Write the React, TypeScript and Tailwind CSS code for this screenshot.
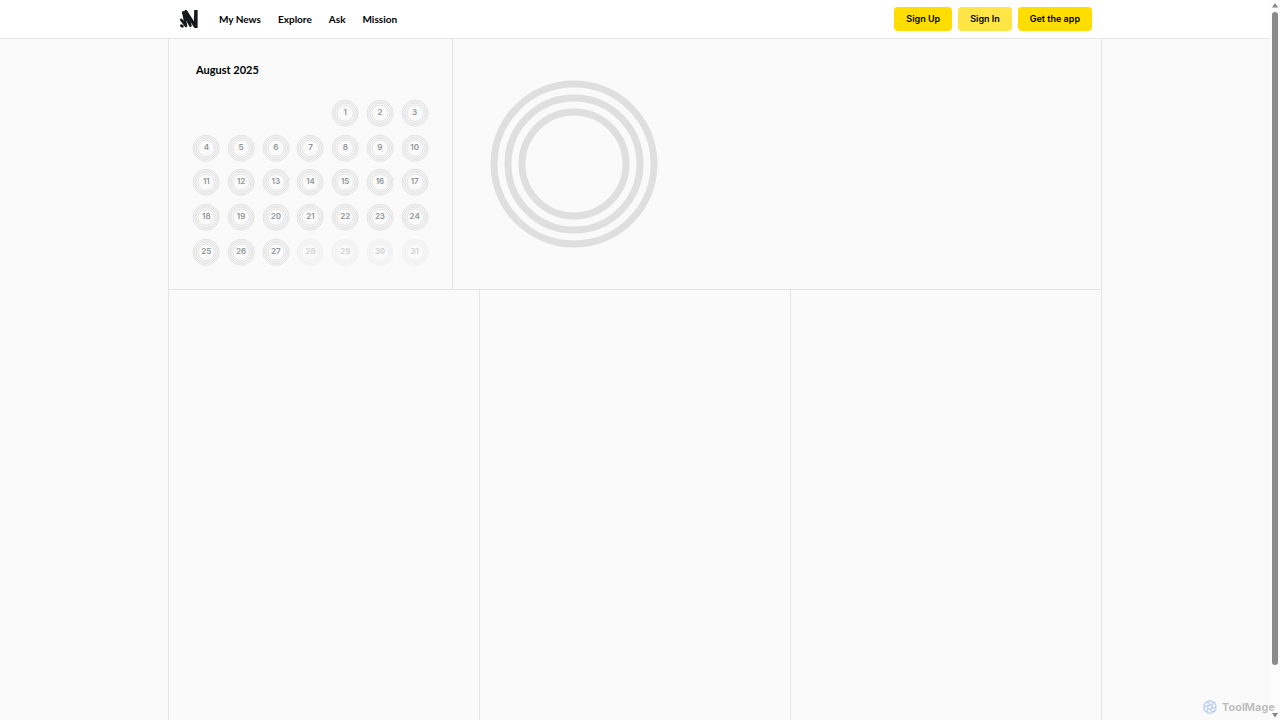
const navItems = ['My News', 'Explore', 'Ask', 'Mission'];
const days = Array.from({ length: 31 }, (_, i) => i + 1);

function Logo() {
  return (
    <svg viewBox="0 0 20 20" className="h-5 w-5" fill="none" stroke="#15191c" strokeLinecap="round" strokeLinejoin="round" aria-hidden="true">
      <path d="M2.4 16.7 3.4 17.2" strokeWidth="2.8" />
      <path d="M2.2 10.8 7 17 4.4 3.6" strokeWidth="2.6" />
      <path d="M4.4 3.6 11.4 16.6 8 5" strokeWidth="2.7" />
      <path d="M6.8 2.6 16 16.8" strokeWidth="3.3" />
      <path d="M15.2 1H18.6V19H15.8L14.8 17.4Z" fill="#15191c" stroke="none" />
    </svg>
  );
}

function DayRings() {
  return (
    <svg viewBox="0 0 28 28" className="h-7 w-7" fill="none" stroke="#d9d9d9" strokeWidth="0.7" aria-hidden="true">
      <circle cx="14.1" cy="14.2" r="13" />
      <circle cx="14.1" cy="14.2" r="11.5" />
      <circle cx="14.1" cy="14.2" r="10" />
      <circle cx="14.1" cy="14.2" r="8.2" />
    </svg>
  );
}

function Watermark() {
  return (
    <div className="fixed right-[5px] bottom-[5px] flex items-center gap-1">
      <svg viewBox="0 0 16 16" className="h-4 w-4" fill="none" stroke="#b5cbf6" strokeWidth="1.2" aria-hidden="true">
        {[0, 60, 120, 180, 240, 300].map((angle) => (
          <path key={angle} d="M4.4 4.2A3.6 3.6 0 0 1 11 3.4Q11.4 5 9.8 7" transform={`rotate(${angle} 8 8)`} />
        ))}
        <circle cx="8" cy="8" r="2.2" />
      </svg>
      <span className="text-[11px] leading-4 font-bold text-[#bcbcbc]">ToolMage</span>
    </div>
  );
}

export default function App() {
  return (
    <div className="flex min-h-screen bg-[#fafafa] font-['Inter','Liberation_Sans',sans-serif] text-black">
      <div className="flex min-w-0 flex-1 flex-col">
        <header className="border-b border-[#e5e5e5] bg-white">
          <div className="mx-auto flex h-[38px] max-w-[934px] items-center pr-[10px] pl-[11px]">
            <a href="#" aria-label="Home"><Logo /></a>
            <nav className="ml-5 flex gap-[17px] font-['Lato','Liberation_Sans',sans-serif] text-[10px] leading-4 font-bold">
              {navItems.map((item) => <a key={item} href="#">{item}</a>)}
            </nav>
            <div className="ml-auto flex gap-[6px] text-[9px] font-semibold">
              <button className="h-6 rounded-[4px] bg-[#ffdd00] px-3 pb-px">Sign Up</button>
              <button className="h-6 rounded-[4px] bg-[#ffe545] px-3 pb-px">Sign In</button>
              <button className="h-6 rounded-[4px] bg-[#ffdd00] px-3 pb-px">Get the app</button>
            </div>
          </div>
        </header>
        <main className="mx-auto flex w-full max-w-[934px] flex-1 flex-col border-x border-[#e5e5e5]">
          <div className="flex border-b border-[#e5e5e5]">
            <section className="w-[284px] border-r border-[#e5e5e5] px-5 pt-[23px] pb-5">
              <h1 className="pl-[7px] font-['Lato','Liberation_Sans',sans-serif] text-[11px] leading-4 font-bold">August 2025</h1>
              <div className="mt-[18px] grid h-[173px] grid-cols-7 grid-rows-5">
                {days.map((day) => (
                  <a key={day} href="#" className={`relative flex items-center justify-center ${day === 1 ? 'col-start-5' : ''} ${day > 27 ? 'opacity-40' : ''}`}>
                    <DayRings />
                    <span className="absolute inset-0 flex items-center justify-center pb-[2px] text-[8px] font-semibold text-[#8f9697]">{day}</span>
                  </a>
                ))}
              </div>
            </section>
            <section className="flex flex-1 items-center px-[37px]">
              <svg viewBox="0 0 168 168" className="h-[168px] w-[168px]" fill="none" stroke="#dfdfdf" strokeWidth="7" aria-hidden="true">
                <circle cx="84" cy="84" r="80" />
                <circle cx="84" cy="84" r="66" />
                <circle cx="84" cy="84" r="52" />
              </svg>
            </section>
          </div>
          <div className="grid flex-1 grid-cols-3">
            <section className="border-r border-[#e5e5e5]" />
            <section />
            <section className="border-l border-[#e5e5e5]" />
          </div>
        </main>
      </div>
      <div className="flex w-[10px] flex-col items-center bg-[#fcfcfc]" aria-hidden="true">
        <svg viewBox="0 0 10 12" className="h-3 w-[10px]" fill="#858585"><path d="M5 3 8 7.5H2Z" /></svg>
        <div className="h-[653px] w-[6px] rounded-full bg-[#8b8b8b]" />
        <svg viewBox="0 0 10 12" className="mt-auto h-3 w-[10px]" fill="#858585"><path d="M5 9.5 8 5H2Z" /></svg>
      </div>
      <Watermark />
    </div>
  );
}
